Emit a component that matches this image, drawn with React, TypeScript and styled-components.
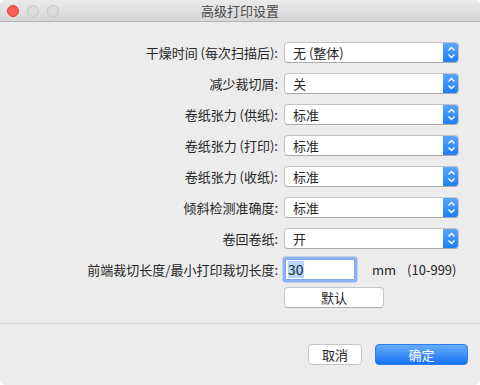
import React from "react";
import styled, { createGlobalStyle } from "styled-components";

const GlobalStyle = createGlobalStyle`
    html, body {
        margin: 0;
        padding: 0;
        background: #ffffff;
    }
    body {
        font-family: "Noto Sans CJK SC", "Noto Sans", "Liberation Sans", sans-serif;
        font-size: 13px;
        color: #262626;
    }
`;

const options = [
    { label: "干燥时间 (每次扫描后):", value: "无 (整体)" },
    { label: "减少裁切屑:", value: "关" },
    { label: "卷纸张力 (供纸):", value: "标准" },
    { label: "卷纸张力 (打印):", value: "标准" },
    { label: "卷纸张力 (收纸):", value: "标准" },
    { label: "倾斜检测准确度:", value: "标准" },
    { label: "卷回卷纸:", value: "开" },
];

const Chevrons = () => (
    <svg width="9" height="13" viewBox="0 0 9 13">
        <path d="M1.5 4.5 L4.5 1.5 L7.5 4.5" fill="none" stroke="#fff" strokeWidth="1.4" />
        <path d="M1.5 8.5 L4.5 11.5 L7.5 8.5" fill="none" stroke="#fff" strokeWidth="1.4" />
    </svg>
);

const App = () => {
    return (
        <>
            <GlobalStyle />
            <Window>
                <TitleBar>
                    <Lights>
                        <Light color="#fc5f57" border="#df3f39" />
                        <Light color="#dcdcdc" border="#c6c6c6" />
                        <Light color="#dcdcdc" border="#c6c6c6" />
                    </Lights>
                    <Title>高级打印设置</Title>
                </TitleBar>
                <Form>
                    {options.map((opt) => (
                        <React.Fragment key={opt.label}>
                            <Label>{opt.label}</Label>
                            <Select>
                                <SelectValue>{opt.value}</SelectValue>
                                <Stepper>
                                    <Chevrons />
                                </Stepper>
                            </Select>
                        </React.Fragment>
                    ))}
                    <Label>前端裁切长度/最小打印裁切长度:</Label>
                    <LengthRow>
                        <TextField>
                            <Selected>30</Selected>
                        </TextField>
                        <Unit>mm</Unit>
                        <Range>(10-999)</Range>
                    </LengthRow>
                    <span />
                    <PushButton>默认</PushButton>
                </Form>
                <Separator />
                <Footer>
                    <FooterButton width={54}>取消</FooterButton>
                    <FooterButton width={93} primary>
                        确定
                    </FooterButton>
                </Footer>
            </Window>
        </>
    );
};

interface LightProps {
    color: string;
    border: string;
}

interface ButtonProps {
    width: number;
    primary?: boolean;
}

const Window = styled.div`
    box-sizing: border-box;
    width: 480px;
    height: 385px;
    background: #ececec;
    border-radius: 5px;
    overflow: hidden;
    display: flex;
    flex-direction: column;
`;

const TitleBar = styled.div`
    position: relative;
    box-sizing: border-box;
    height: 22px;
    background: linear-gradient(#ebebeb, #d5d5d5);
    border-bottom: 1px solid #b3b3b3;
    display: flex;
    align-items: center;
    justify-content: center;
`;

const Lights = styled.div`
    position: absolute;
    left: 7px;
    top: 5px;
    display: flex;
    gap: 8px;
`;

const Light = styled("div")<LightProps>`
    box-sizing: border-box;
    width: 12px;
    height: 12px;
    border-radius: 50%;
    background: ${({ color }) => color};
    border: 1px solid ${({ border }) => border};
`;

const Title = styled.div`
    font-size: 13px;
    color: #4a4a4a;
    line-height: 22px;
`;

const Form = styled.div`
    display: grid;
    grid-template-columns: 1fr 175px;
    grid-auto-rows: 21px;
    column-gap: 6px;
    row-gap: 10px;
    padding: 20px 21px 0 0;
`;

const Label = styled.div`
    display: flex;
    align-items: center;
    justify-content: flex-end;
    white-space: nowrap;
    color: #262626;
`;

const Select = styled.div`
    box-sizing: border-box;
    display: flex;
    height: 21px;
    background: #fff;
    border: 1px solid #c3c3c3;
    border-bottom-color: #a9a9a9;
    border-radius: 4px;
    overflow: hidden;
`;

const SelectValue = styled.div`
    flex: 1;
    display: flex;
    align-items: center;
    padding-left: 8px;
`;

const Stepper = styled.div`
    width: 16px;
    display: flex;
    align-items: center;
    justify-content: center;
    background: linear-gradient(#5fa7fb, #1a7cf6);
    margin: -1px -1px -1px 0;
`;

const LengthRow = styled.div`
    display: flex;
    align-items: center;
    white-space: nowrap;
`;

const TextField = styled.div`
    box-sizing: border-box;
    width: 70px;
    height: 21px;
    margin-left: 1px;
    background: #fff;
    border: 1px solid #7fa9e6;
    box-shadow: 0 0 0 2.5px #8ab5f2;
    border-radius: 1px;
    display: flex;
    align-items: center;
    padding-left: 2px;
`;

const Selected = styled.span`
    background: #b4d5fe;
    font-size: 14px;
    line-height: 17px;
`;

const Unit = styled.span`
    margin-left: 17px;
`;

const Range = styled.span`
    margin-left: 11px;
`;

const PushButton = styled.div`
    box-sizing: border-box;
    width: 100px;
    height: 21px;
    background: #fff;
    border: 1px solid #c6c6c6;
    border-bottom-color: #acacac;
    border-radius: 4px;
    display: flex;
    align-items: center;
    justify-content: center;
    margin-top: -3px;
`;

const Separator = styled.div`
    height: 1px;
    background: #d3d3d3;
    margin-top: 12px;
`;

const Footer = styled.div`
    display: flex;
    justify-content: flex-end;
    gap: 13px;
    padding: 20px 12px 0 0;
`;

const FooterButton = styled("div")<ButtonProps>`
    box-sizing: border-box;
    width: ${({ width }) => width}px;
    height: 21px;
    border-radius: 4px;
    display: flex;
    align-items: center;
    justify-content: center;
    background: ${({ primary }) => (primary ? "linear-gradient(#67acfb, #1673f5)" : "#fff")};
    color: ${({ primary }) => (primary ? "#fff" : "#262626")};
    border: 1px solid ${({ primary }) => (primary ? "#2a7df3" : "#c6c6c6")};
`;

export default App;
